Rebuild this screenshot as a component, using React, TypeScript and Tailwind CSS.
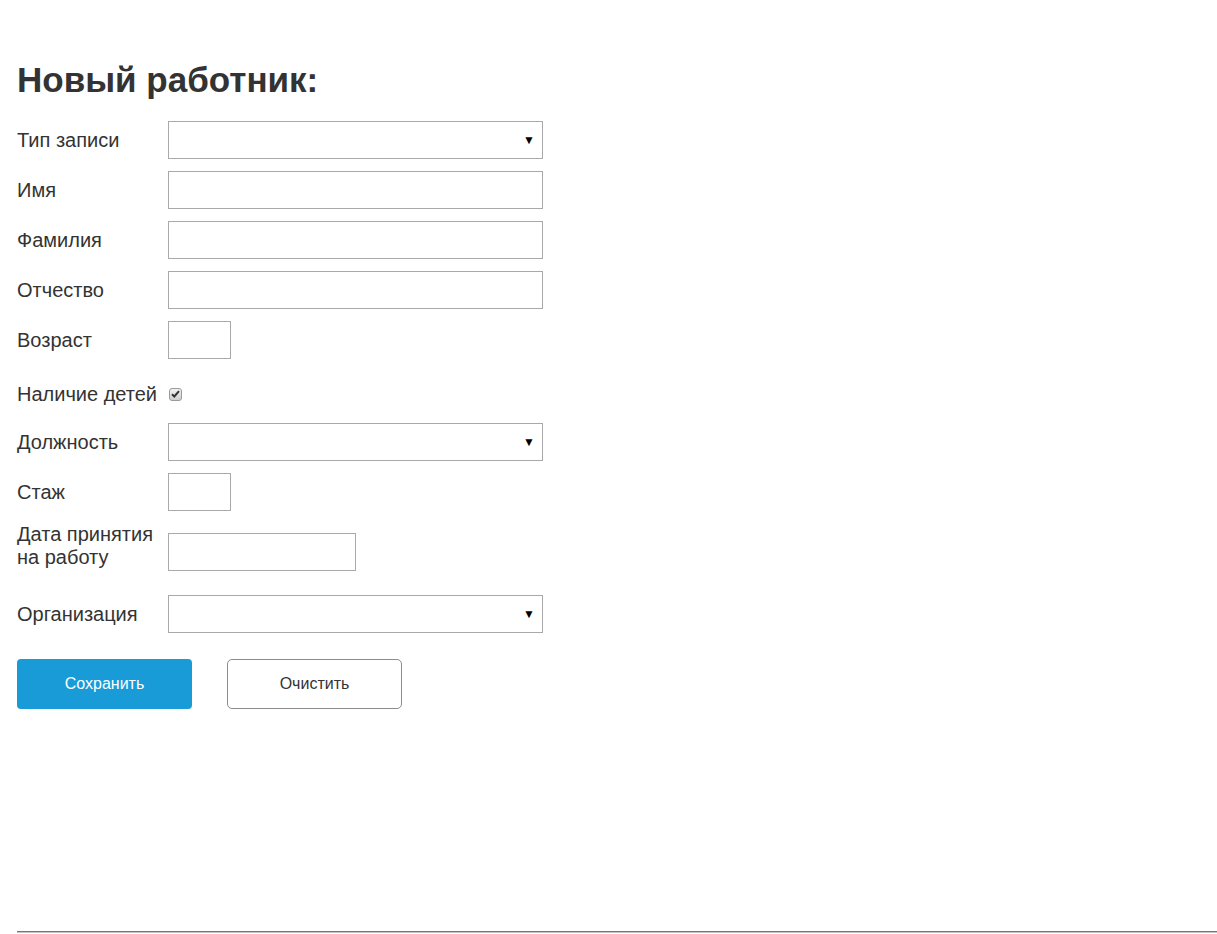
import type { ReactNode } from "react";

const font = { fontFamily: '"Liberation Sans", Arial, sans-serif' };

function Row({ label, children, className = "" }: { label: ReactNode; children: ReactNode; className?: string }) {
    return (
        <div className={"flex items-center " + className}>
            <label className="w-[151px] shrink-0 text-[20px] leading-[23px] text-[#333]">{label}</label>
            {children}
        </div>
    );
}

function Select() {
    return (
        <div className="flex h-[38px] w-[375px] items-center justify-end border border-[#a9a9a9] bg-white pr-[7px]">
            <span className="text-[12px] leading-none text-black">▼</span>
        </div>
    );
}

function Input({ w }: { w: string }) {
    return <div className={"h-[38px] border border-[#a9a9a9] bg-white " + w} />;
}

export default function App() {
    return (
        <div className="min-h-screen bg-white" style={font}>
            <div className="pl-[17px] pt-[60px]">
                <h2 className="text-[35px] font-bold leading-[40px] text-[#333]">Новый работник:</h2>

                <div className="mt-[21px] flex flex-col gap-[12px]">
                    <Row label="Тип записи"><Select /></Row>
                    <Row label="Имя"><Input w="w-[375px]" /></Row>
                    <Row label="Фамилия"><Input w="w-[375px]" /></Row>
                    <Row label="Отчество"><Input w="w-[375px]" /></Row>
                    <Row label="Возраст"><Input w="w-[63px]" /></Row>
                    <Row label="Наличие детей" className="h-[40px] pt-[6px]">
                        <span className="ml-[1px] flex h-[13px] w-[13px] items-center justify-center rounded-[3px] border border-[#9a9a9a] bg-gradient-to-b from-[#f2f2f2] to-[#cfcfcf]">
                            <svg width="9" height="8" viewBox="0 0 9 8">
                                <path d="M1 4.3 L3.3 6.5 L8 1.2" fill="none" stroke="#333" strokeWidth="2" />
                            </svg>
                        </span>
                    </Row>
                    <Row label="Должность"><Select /></Row>
                    <Row label="Стаж"><Input w="w-[63px]" /></Row>
                    <Row label={<>Дата принятия<br />на работу</>} className="!items-start mb-[12px]">
                        <div className="mt-[10px]"><Input w="w-[188px]" /></div>
                    </Row>
                    <Row label="Организация"><Select /></Row>
                </div>

                <div className="mt-[26px] flex gap-[35px]">
                    <button className="h-[50px] w-[175px] rounded-[4px] bg-[#189bd7] text-[16px] text-white">Сохранить</button>
                    <button className="h-[50px] w-[175px] rounded-[5px] border border-[#8c8c8c] bg-white text-[16px] text-[#333]">Очистить</button>
                </div>
            </div>

            <div className="ml-[17px] mt-[222px] border-t border-b border-t-[#777] border-b-[#c4c4c4]" />
        </div>
    );
}
